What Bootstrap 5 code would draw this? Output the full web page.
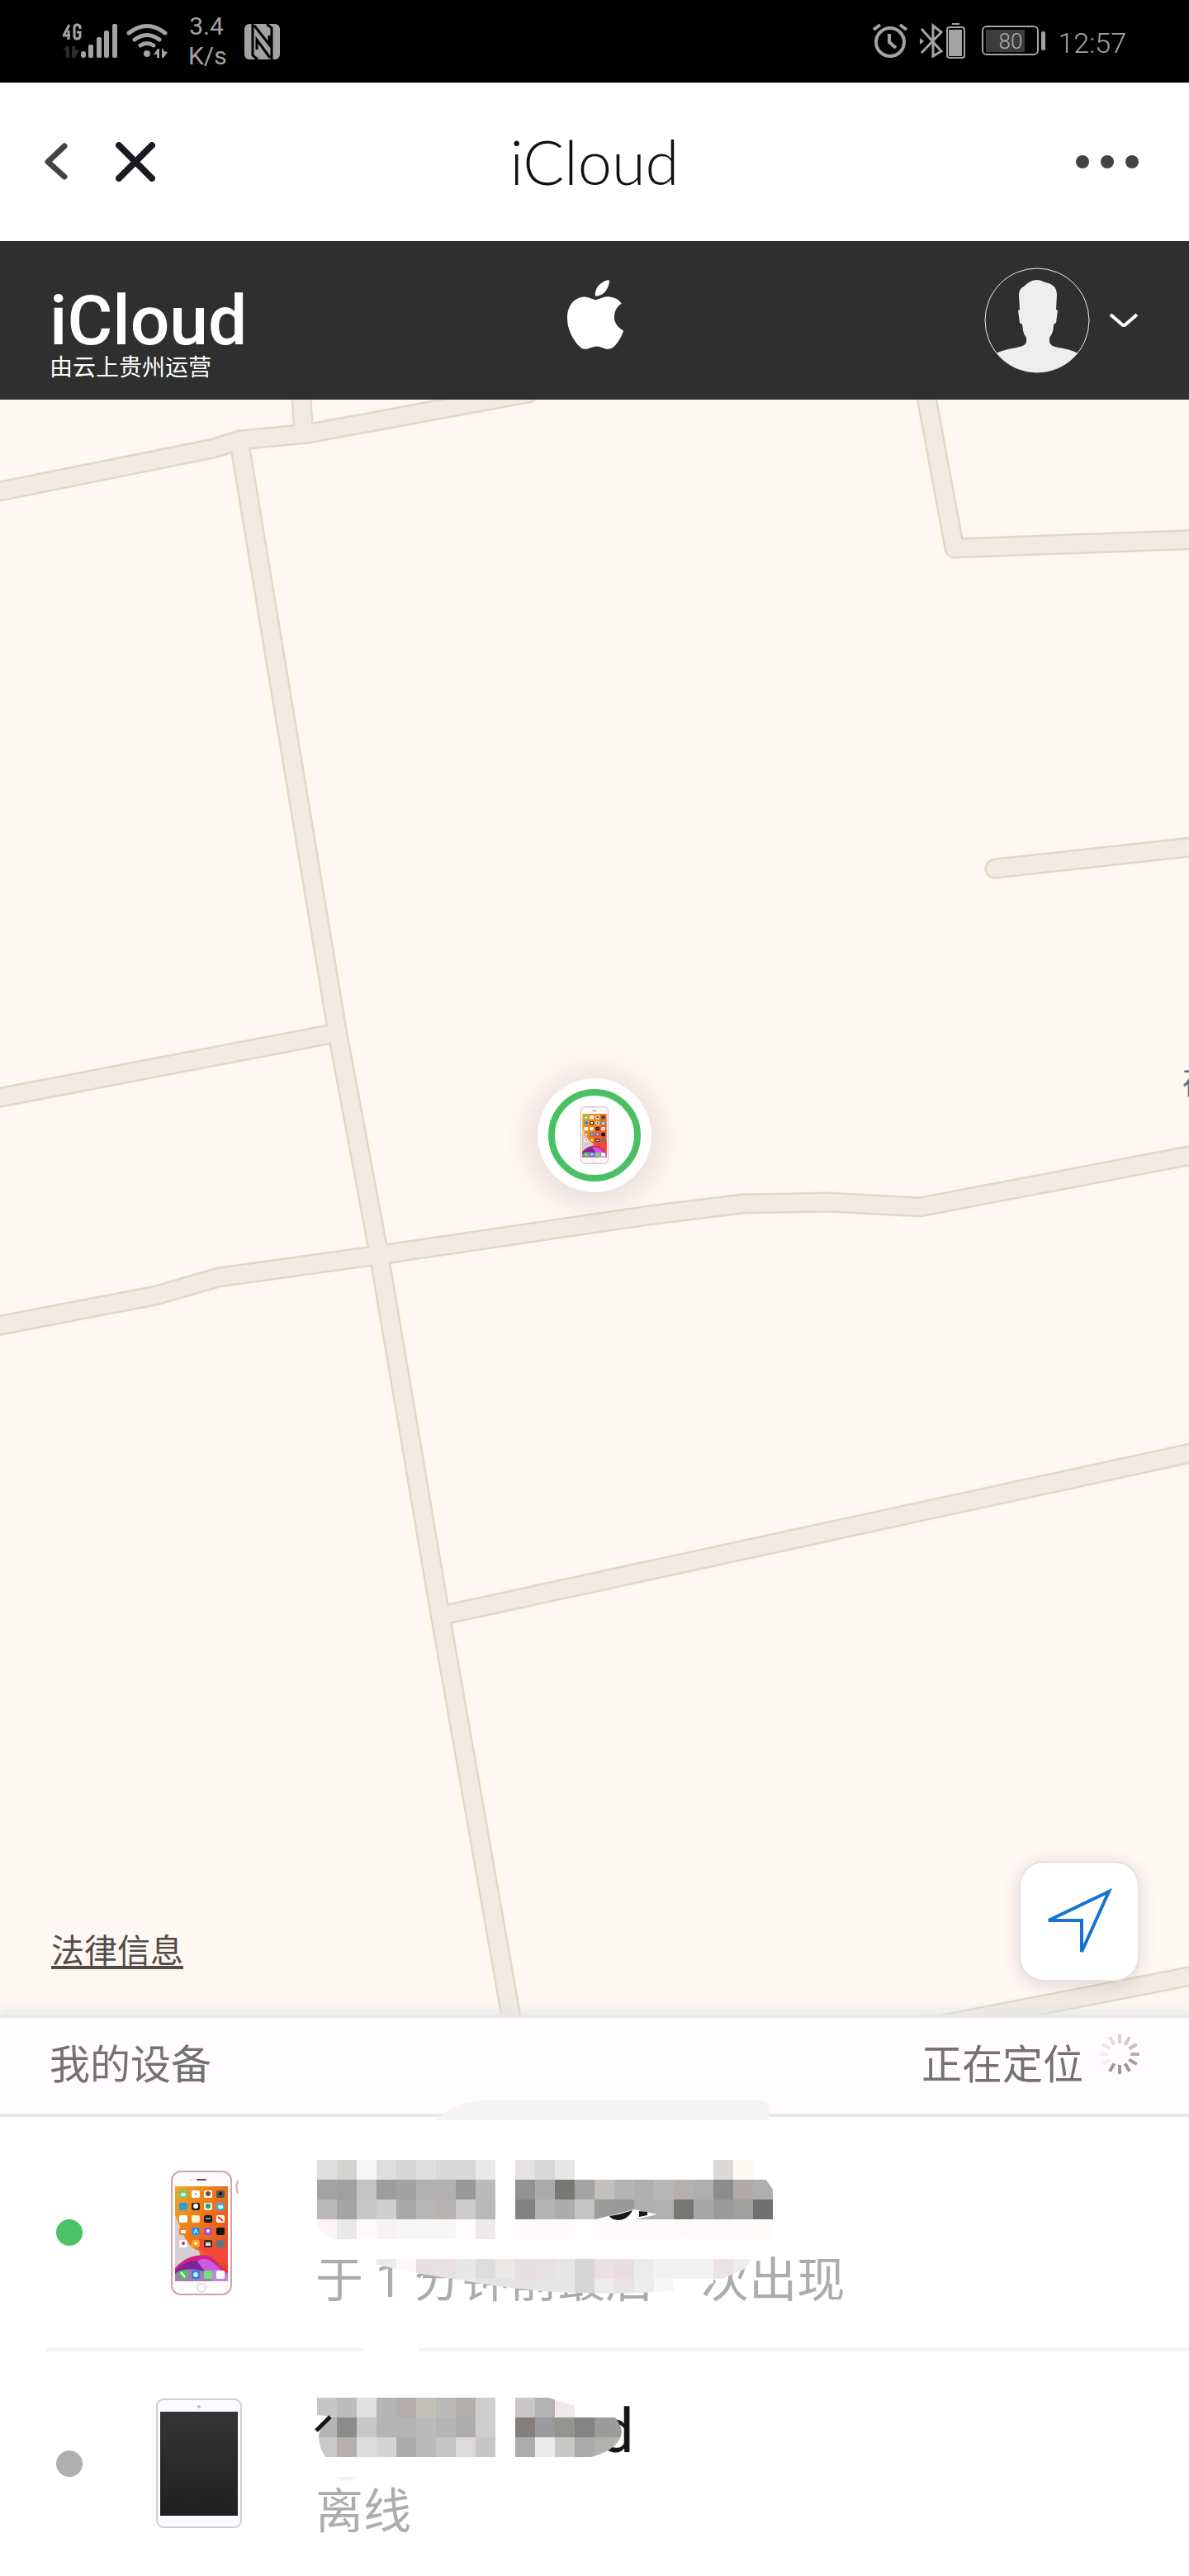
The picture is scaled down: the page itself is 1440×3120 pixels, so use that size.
<!DOCTYPE html>
<html lang="zh-CN">
<head>
<meta charset="utf-8">
<meta name="viewport" content="width=device-width, initial-scale=1">
<title>iCloud</title>
<link href="https://cdn.jsdelivr.net/npm/bootstrap@5.3.0/dist/css/bootstrap.min.css" rel="stylesheet">
<style>
  body { font-family: Roboto, "Noto Sans CJK SC", sans-serif; background: #fff; }
  svg { display: block; flex: none; }
  button { background: none; border: 0; padding: 0; }
  .status-bar { background: #000; color: #a3a3a3; height: 100px; padding: 0 76px; }
  .net-speed { font-size: 30px; line-height: 36px; width: 44px; }
  .battery { margin-left: 20px; }
  .clock { font: 300 34px/44px "Liberation Sans Narrow", Roboto, sans-serif; margin-left: 14px; padding-top: 4px; }
  .title-bar { height: 192px; padding: 0 54px; display: grid; grid-template-columns: 1fr auto 1fr; }
  .title-bar h1 { font: 300 74px/96px Lato, sans-serif; color: #111; }
  .nav-actions { gap: 56px; }
  .site-header { background: #2f2f2f; height: 192px; padding: 0 60px; display: grid; grid-template-columns: 1fr auto 1fr; }
  .brand-name { font-size: 84px; font-weight: 500; line-height: 90px; }
  .brand-note { font-size: 28px; line-height: 24px; }
  .brand-block { padding-top: 52px; }
  .apple-logo { padding-top: 47px; }
  .account { gap: 22px; padding-top: 32px; }
  .map-area { background: #fef7f4; min-height: 600px; }
  .map-pin { width: 138px; height: 138px; top: 822px; left: 50%; transform: translateX(-50%); background: #fff; box-shadow: 0 4px 30px 12px rgba(110, 80, 70, .13); }
  .pin-ring { width: 112px; height: 112px; border: 8px solid #4bbf63; }
  .place-label { right: -30px; top: 804px; font-size: 38px; line-height: 48px; color: #5f6d82; }
  .map-tools { padding: 0 62px 42px; }
  .legal { font-size: 40px; line-height: 52px; margin-bottom: 8px; color: #4f4c48; text-decoration-thickness: 4px; text-underline-offset: 4px; }
  .legal:hover { color: #222; }
  .locate { width: 142px; height: 142px; border-radius: 28px; background: #fff; box-shadow: 0 0 0 2px #e4e2e3, 0 4px 22px rgba(90, 60, 60, .2); }
  .list-head { background: #fffbfe; color: #727272; border-top: 4px solid #e8e8e8; border-bottom: 4px solid #e8e8e8; height: 124px; padding: 0 60px; font-size: 49px; box-shadow: 0 -8px 8px rgba(225, 225, 232, .5); }
  .locating { gap: 20px; }
  .locating svg { margin-bottom: 28px; }
  .device { margin-left: 56px; height: 280px; padding-left: 12px; }
  .device + .device { border-top: 4px solid #f3f3f3; height: 276px; }
  .dot { width: 32px; height: 32px; background: #afafaf; flex: none; }
  .dot.online { background: #4cc266; }
  .thumb { width: 282px; }
  .thumb-phone { padding-left: 107px; }
  .thumb-tablet { padding-left: 89px; }
  .device-name { height: 116px; font-size: 74px; font-weight: 400; color: #161616; line-height: 116px; }
  .device-name .tail { padding-left: 344px; }
  .device-state { font-size: 58px; line-height: 78px; color: #acacac; white-space: nowrap; }
  .mosaic { position: absolute; left: 0; top: 0; overflow: visible; }
</style>
<script src="https://cdn.jsdelivr.net/npm/bootstrap@5.3.0/dist/js/bootstrap.bundle.min.js"></script>
</head>
<body class="d-flex flex-column min-vh-100">

<svg width="0" height="0" class="position-absolute" aria-hidden="true">
  <defs>
    <linearGradient id="wall" x1="0" y1="0" x2="1" y2="1">
      <stop offset="0" stop-color="#e9a92e"/><stop offset=".35" stop-color="#f07f16"/><stop offset="1" stop-color="#e2382c"/>
    </linearGradient>
    <linearGradient id="glass" x1="0" y1="0" x2="0" y2="1">
      <stop offset="0" stop-color="#343434"/><stop offset="1" stop-color="#202020"/>
    </linearGradient>
    <symbol id="phone" viewBox="0 0 74 151">
      <rect x="1" y="1" width="72" height="149" rx="11" fill="#fffafa" stroke="#cfa3a8" stroke-width="2"/>
      <rect x="31" y="10" width="12" height="2" rx="1" fill="#555"/><circle cx="24" cy="11" r="1" fill="#bbb"/>
      <rect x="5" y="19" width="64" height="115" fill="url(#wall)"/>
      <path d="M5 54C18 84 20 92 34 97L36 106 5 122Z" fill="#d4cfd2"/>
      <path d="M34 94Q46 108 69 114V90L34 82Z" fill="#f2483c"/>
      <path d="M5 118Q24 98 48 104L69 124V134H5Z" fill="#d31d86"/>
      <path d="M5 122Q22 104 40 112L58 134H5Z" fill="#7b2696"/>
      <path d="M32 110Q44 98 69 130V134H50Z" fill="#c95be0"/>
      <path d="M5 125Q16 116 40 122 56 118 69 124V134H5Z" fill="#b9a0c4" opacity=".7"/>
      <g fill="#fff">
        <rect x="10" y="24" width="10" height="9" rx="2" fill="#5fd668"/><rect x="25" y="24" width="10" height="9" rx="2"/><rect x="40" y="24" width="10" height="9" rx="2"/><rect x="55" y="24" width="10" height="9" rx="2" fill="#555"/>
        <rect x="10" y="39" width="10" height="9" rx="2" fill="#2a9fe0"/><rect x="25" y="39" width="10" height="9" rx="2" fill="#222"/><rect x="40" y="39" width="10" height="9" rx="2" fill="#e9f4dc"/><rect x="55" y="39" width="10" height="9" rx="2" fill="#35b3ea"/>
        <rect x="10" y="54" width="10" height="9" rx="2"/><rect x="25" y="54" width="10" height="9" rx="2" fill="#fff4c6"/><rect x="40" y="54" width="10" height="9" rx="2" fill="#1c1c22"/><rect x="55" y="54" width="10" height="9" rx="2"/>
        <rect x="10" y="69" width="10" height="9" rx="2" fill="#f47f1c"/><rect x="25" y="69" width="10" height="9" rx="2" fill="#1e93ef"/><rect x="40" y="69" width="10" height="9" rx="2" fill="#a44ed6"/><rect x="55" y="69" width="10" height="9" rx="2" fill="#141414"/>
        <rect x="10" y="84" width="10" height="9" rx="2"/><rect x="25" y="84" width="10" height="9" rx="2" fill="#f8a21b"/><rect x="40" y="84" width="10" height="9" rx="2" fill="#332"/><rect x="55" y="84" width="10" height="9" rx="2" fill="#677"/>
        <rect x="10" y="121" width="10" height="10" rx="2" fill="#3fce4e"/><rect x="25" y="121" width="10" height="10" rx="2" fill="#2b7fe6"/><rect x="40" y="121" width="10" height="10" rx="2" fill="#6fe07a"/><rect x="55" y="121" width="10" height="10" rx="2"/>
      </g>
      <circle cx="45" cy="28" r="3" fill="#7a4a2a"/><circle cx="60" cy="28" r="2" fill="#111"/><circle cx="30" cy="43" r="3" fill="#fff"/><circle cx="45" cy="43" r="3" fill="#2e9e83"/><path d="M57 56L63 61" stroke="#e23" stroke-width="2"/><circle cx="15" cy="88" r="2" fill="#d25"/><circle cx="30" cy="88" r="2" fill="#fff"/><rect x="12" y="72" width="6" height="4" fill="#fff"/><path d="M28 76L30 71 32 76M42 58H48" stroke="#fff" fill="none"/><rect x="42" y="87" width="6" height="4" fill="#ddd"/><rect x="12" y="27" width="6" height="4" rx="2" fill="#fff"/><circle cx="30" cy="126" r="3" fill="#cfe6ff"/><rect x="57" y="42" width="6" height="4" rx="2" fill="#fff"/><circle cx="30" cy="28" r="1" fill="#e33"/><circle cx="45" cy="73" r="2" fill="#fff"/><path d="M12 123L17 129" stroke="#fff" stroke-width="2"/>
      <circle cx="37" cy="142" r="5" fill="#fff" stroke="#cdbcc0"/>
    </symbol>
  </defs>
</svg>

<div class="status-bar d-flex align-items-center justify-content-between">
  <div class="d-flex align-items-center">
    <svg width="66" height="44" viewBox="76 28 66 44" fill="#a3a3a3" role="img" aria-label="4G">
      <path d="M84 30L77 43H85M83 37V48M97 35V33Q97 30 93 30 90 30 90 34V43Q90 47 93 47 97 47 97 43V39H93" fill="none" stroke="#a3a3a3" stroke-width="3"/>
      <path d="M76 61L81 56H84V70H80V61ZM87 56H91V60L96 61 91 70H87Z" fill="#2c2c2c"/>
      <rect x="98" y="62" width="6" height="8" rx="3"/><rect x="107" y="54" width="6" height="16" rx="2"/><rect x="117" y="45" width="6" height="25" rx="2"/><rect x="126" y="37" width="6" height="33" rx="2"/><rect x="136" y="29" width="6" height="41" rx="2"/>
    </svg>
    <svg class="ms-2" width="54" height="44" viewBox="150 28 54 44" fill="none" stroke="#a3a3a3" stroke-width="5" stroke-linecap="round">
      <path d="M156 40Q178 23 200 40M163 48Q178 37 193 48M170 55Q178 50 186 55"/>
      <g fill="#a3a3a3" stroke="none"><circle cx="178" cy="65" r="4"/><path d="M186 66L191 59H193V70H190V66ZM196 59H198V62L203 63 198 70H196Z"/></g>
    </svg>
    <div class="net-speed text-center ms-4">3.4 K/s</div>
    <svg class="ms-4" width="43" height="43" viewBox="0 0 43 43">
      <rect width="43" height="43" rx="6" fill="#a3a3a3"/>
      <path d="M10 0V38L16 43M33 43V5L27 0M12 2L30 25V14M31 41L15 19V31" fill="none" stroke="#000" stroke-width="3"/>
    </svg>
  </div>
  <div class="d-flex align-items-center">
    <svg width="112" height="44" viewBox="1069 28 112 44" fill="none" stroke="#a3a3a3" stroke-width="4">
      <circle cx="1090" cy="51" r="17"/><path d="M1089 41V51L1097 58M1070 36L1078 30M1102 30L1110 36"/>
      <path d="M1128 35L1152 62 1142 68V31L1152 39 1128 64" stroke-width="3"/><path d="M1126 46L1131 50 1126 54Z" fill="#a3a3a3" stroke="none"/>
      <rect x="1159" y="33" width="21" height="37" rx="3" stroke-width="2"/><rect x="1161" y="36" width="16" height="32" fill="#a3a3a3" stroke="none"/><path d="M1165 29H1174" stroke-width="2"/>
    </svg>
    <svg class="battery" width="78" height="38" viewBox="1200 32 78 38">
      <rect x="1201" y="33" width="67" height="34" rx="5" fill="none" stroke="#a3a3a3" stroke-width="2"/><rect x="1205" y="37" width="47" height="27" fill="#3c3c3c"/><rect x="1272" y="39" width="5" height="23" rx="2" fill="#a3a3a3"/>
      <text x="1235" y="60" text-anchor="middle" font-family="Liberation Sans Narrow, Roboto, sans-serif" font-size="26" font-weight="300" fill="#b0b0b0">80</text>
    </svg>
    <div class="clock">12:57</div>
  </div>
</div>

<nav class="title-bar align-items-center">
  <div class="d-flex align-items-center nav-actions">
    <button type="button" aria-label="返回"><svg width="30" height="46" viewBox="0 0 30 46"><path d="M24 4L4 23 24 41" fill="none" stroke="#444" stroke-width="7" stroke-linecap="round" stroke-linejoin="round"/></svg></button>
    <button type="button" aria-label="关闭"><svg width="48" height="48" viewBox="0 0 48 48"><path d="M4 4L44 44M44 4L4 44" stroke="#1a1a22" stroke-width="8" stroke-linecap="round"/></svg></button>
  </div>
  <h1 class="m-0">iCloud</h1>
  <button type="button" class="ms-auto" aria-label="更多"><svg width="84" height="16" viewBox="0 0 84 16" fill="#434343"><circle cx="9" cy="8" r="8"/><circle cx="39" cy="8" r="8"/><circle cx="69" cy="8" r="8"/></svg></button>
</nav>

<header class="site-header text-white">
  <div class="brand-block">
    <div class="brand-name">iCloud</div>
    <div class="brand-note">由云上贵州运营</div>
  </div>
  <div class="apple-logo">
    <svg width="69" height="84" viewBox="1.3 0 13.2 16" fill="#fff" role="img" aria-label="Apple"><path d="M11.182.008C11.148-.03 9.923.023 8.857 1.18c-1.066 1.156-.902 2.482-.878 2.516s1.52.087 2.475-1.258.762-2.391.728-2.43m3.314 11.733c-.048-.096-2.325-1.234-2.113-3.422s1.675-2.789 1.698-2.854-.597-.79-1.254-1.157a3.7 3.7 0 0 0-1.563-.434c-.108-.003-.483-.095-1.254.116-.508.139-1.653.589-1.968.607-.316.018-1.256-.522-2.267-.665-.647-.125-1.333.131-1.824.328-.49.196-1.422.754-2.074 2.237-.652 1.482-.311 3.83-.067 4.56s.625 1.924 1.273 2.796c.576.984 1.34 1.667 1.659 1.899s1.219.386 1.843.067c.502-.308 1.408-.485 1.766-.472.357.013 1.061.154 1.782.539.571.197 1.111.115 1.652-.105.541-.221 1.324-1.059 2.238-2.758q.52-1.185.473-1.282"/></svg>
  </div>
  <div>
    <button type="button" class="account d-flex align-items-center ms-auto" aria-label="账户">
      <svg width="128" height="128" viewBox="0 0 128 128">
        <clipPath id="disc"><circle cx="64" cy="64" r="63"/></clipPath>
        <path clip-path="url(#disc)" fill="#eee" d="M64 15C69 15 72 18 78 19 86 22 88 27 88 34L87 51 89 52 87 67 84 69C84 75 83 80 79 85V90C80 94 84 96 90 97 102 99 108 101 114 104V128H14V104C20 101 28 99 39 97 47 95 50 94 51 90V85C47 80 47 75 46 69L43 67 41 52 43 51 42 34C42 28 44 25 48 23 53 18 58 15 64 15Z"/>
        <circle cx="64" cy="64" r="63" fill="none" stroke="#eee" stroke-width="1"/>
      </svg>
      <svg width="38" height="20" viewBox="0 0 38 20"><path d="M3 3L18 16H20L35 3" fill="none" stroke="#fff" stroke-width="4"/></svg>
    </button>
  </div>
</header>

<main class="map-area position-relative overflow-hidden flex-grow-1 d-flex flex-column justify-content-end">
  <svg class="position-absolute top-0 start-0 w-100 h-100" viewBox="0 484 1440 1956" preserveAspectRatio="xMidYMin slice" aria-hidden="true">
    <defs>
      <g id="roads" fill="none" stroke-linecap="round" stroke-linejoin="round">
        <path d="M-20 599L259 543 290 533 374 525 640 476M364 470L368 525"/>
        <path d="M290 536L408 1247 459 1520 533 1955 622 2460"/>
        <path d="M-20 1333L408 1251"/>
        <path d="M-20 1609L189 1569 265 1547 459 1520 786 1472 899 1458 1004 1456 1114 1462 1460 1396"/>
        <path d="M533 1957L1460 1756"/>
        <path d="M1120 470L1156 664 1460 653"/>
        <path d="M1205 1052L1460 1024"/>
        <path d="M1120 2456L1460 2390"/>
      </g>
    </defs>
    <use href="#roads" stroke="#fdf8ee" stroke-width="34"/>
    <use href="#roads" stroke="#dfd9cb" stroke-width="25"/>
    <use href="#roads" stroke="#f1ebe1" stroke-width="20"/>
  </svg>
  <span class="place-label position-absolute">荷</span>
  <div class="map-pin position-absolute rounded-circle d-flex align-items-center justify-content-center">
    <div class="pin-ring rounded-circle d-flex align-items-center justify-content-center">
      <svg width="34" height="70"><use href="#phone" width="34" height="70"/></svg>
    </div>
  </div>
  <div class="map-tools position-relative d-flex justify-content-between align-items-end">
    <a href="#" class="legal">法律信息</a>
    <button type="button" class="locate d-flex align-items-center justify-content-center" aria-label="定位">
      <svg width="80" height="80" viewBox="0 0 80 80"><path d="M3 39L76 4 43 77V39Z" fill="none" stroke="#1673d1" stroke-width="4"/></svg>
    </button>
  </div>
</main>

<section>
  <div class="list-head position-relative d-flex align-items-center justify-content-between">
    <span>我的设备</span>
    <span class="locating d-flex align-items-center">正在定位
      <svg width="48" height="48" viewBox="-24 -24 48 48" stroke-width="4" stroke="#999">
        <path d="M0-13V-24" opacity=".4"/><path d="M0-13V-24" transform="rotate(30)" opacity=".5"/><path d="M0-13V-24" transform="rotate(60)" opacity=".6"/><path d="M0-13V-24" transform="rotate(90)" opacity=".75"/><path d="M0-13V-24" transform="rotate(120)" opacity=".9"/><path d="M0-13V-24" transform="rotate(150)"/><path d="M0-13V-24" transform="rotate(180)"/><path d="M0-13V-24" transform="rotate(210)"/><path d="M0-13V-24" transform="rotate(240)" opacity=".1"/><path d="M0-13V-24" transform="rotate(270)" opacity=".12"/><path d="M0-13V-24" transform="rotate(300)" opacity=".2"/><path d="M0-13V-24" transform="rotate(330)" opacity=".3"/>
      </svg>
    </span>
  </div>
  <ul class="list-unstyled m-0">
    <li class="device d-flex align-items-center">
      <span class="dot online rounded-circle"></span>
      <div class="thumb thumb-phone"><svg width="82" height="151" viewBox="0 0 82 151"><use href="#phone" width="74" height="151"/><path d="M81 12Q78 20 81 28" fill="none" stroke="#d9a9a9" stroke-width="2"/></svg></div>
      <div class="position-relative">
        <div class="device-name"></div>
        <div class="device-state">于 1 分钟前最后一次出现</div>
        <svg class="mosaic" id="cover-a" width="560" height="194" viewBox="382 2607 560 194" aria-hidden="true"></svg>
      </div>
    </li>
    <li class="device d-flex align-items-center">
      <span class="dot rounded-circle"></span>
      <div class="thumb thumb-tablet">
        <svg width="104" height="158" viewBox="0 0 104 158"><rect x="1" y="1" width="102" height="155" rx="8" fill="#fcfbff" stroke="#cfcfcf" stroke-width="2"/><circle cx="52" cy="10" r="2" fill="#bbb"/><rect x="5" y="16" width="94" height="126" fill="url(#glass)"/></svg>
      </div>
      <div class="position-relative">
        <div class="device-name"><span class="tail">d</span></div>
        <div class="device-state">离线</div>
        <svg class="mosaic" id="cover-b" width="400" height="194" viewBox="382 2887 400 194" aria-hidden="true"></svg>
      </div>
    </li>
  </ul>
</section>

<script>
  // Privacy covers: rows of 24px cells, "-" leaves a cell empty.
  function cells(rows, x0) {
    return rows.map(function (r) {
      return r[1].split(' ').map(function (c, i) {
        return c === '-' ? '' : '<rect x="' + (x0 + i * 24) + '" y="' + r[0] + '" width="24" height="24" fill="#' + c + '"/>';
      }).join('');
    }).join('');
  }
  document.getElementById('cover-a').innerHTML =
    '<path d="M528 2568Q548 2546 584 2544H922Q931 2544 931 2556V2568Z" fill="#f5f5f5"/>' +
    '<clipPath id="ca"><path d="M384 2600H900L936 2652V2712H402L384 2698Z"/></clipPath><g clip-path="url(#ca)" shape-rendering="crispEdges">' + cells([
      [2616, 'dedede d5d3d2 f6f6f6 dedede d6d6d6 dedede d8d8d8 d8d8d8 e9e9e9 - e5e2e1 d8d8d8 e8e8e8 - - - - - - - dbd9d8 fef9f5'],
      [2640, 'a3a3a3 a0a0a0 c3c3c3 9d9d9d a2a2a2 b1b1b1 b1b1b1 989898 bbbbbb - 929292 ababab 787873 a3a3a3 c3bfbb b4b4b4 afafaf b7b7b7 b5b0ae aeaeae 8d8d8d b0aba9 afafaf'],
      [2664, 'b9b9b9 a4a4a4 c9c7c6 cfcfcf a9a9a9 b6b6b6 b8b2b0 cdcdcd b8b8b8 - 828282 b4b4b4 acacac c4c4c4 9b9b99 999999 afafaf b0b0b0 787873 a6a6a6 9b9b9b 9f9f9d 707070'],
      [2688, 'fdf4f6 e9e9e9 fefafc f7f2f4 f6f6f6 f6f6f6 f6f6f6 fefdfb eeeaea - fefafd fefafd fefafd - fefafd fefafd fefafd fefafd fefafb fefafd fefafd fefafd fefbf9']
    ], 384) + '</g>' +
    '<path d="M721 2688L768 2676 796 2682 770 2688Z" fill="#fff"/><path d="M738 2684Q752 2682 766 2677 760 2689 748 2689 740 2688 738 2684ZM774 2678L784 2679V2683L774 2685Z" fill="#161616"/>' +
    '<clipPath id="cb"><path d="M456 2730V2743Q510 2755 560 2762 640 2776 700 2777 790 2780 853 2770L902 2748 914 2730Z"/></clipPath><g clip-path="url(#cb)" shape-rendering="crispEdges"><path d="M450 2728H920V2736H450Z" fill="#fff"/>' + cells([
      [2736, 'ebebeb fef8fb e8dfe2 e7e1e3 e8e8e8 dddddd ebe8e6 e7dfe1 e7e1e3 e6e6e6 d6d6d6 ebe0e3 e8dee2 ececec f2f2f2 f2f2f2 f2f2f2 ece3e5 efefef'],
      [2760, 'ebebeb ebebeb ebebeb ebebeb ebebeb e4e4e4 e4e4e4 e6e2e3 e6e6e6 e6e6e6 d6d6d6 ececec e9e3e5 ededed f7f7f7 ffffff ffffff']
    ], 456) + '</g>';
  document.getElementById('cover-b').innerHTML =
    '<path d="M436 2842H508V2846L500 2850H444Z" fill="#fff"/>' +
    '<clipPath id="cc"><path d="M384 2904H664L745 2928Q753 2938 753 2946 751 2966 716 2976H394Q386 2964 386 2950 388 2936 402 2927L384 2925Z"/></clipPath><g clip-path="url(#cc)" shape-rendering="crispEdges">' + cells([
      [2904, 'c6c6c6 bcbcbc e0e0e0 b5b5b5 b3aeac c3bfb9 bababa b2aeac cecece - cbc7c6 b2b2b2 f1e9e9'],
      [2928, 'b5b5b5 8c8c8a c7c7c7 b4b4b4 b4b4b4 bbbbbb b5b5b5 adadad cecece - 857f7b 9b9b9f 949491 838383 9b9b9b 9b9b9b'],
      [2952, 'cbc9c8 b7afab dcdcdc d4d4d4 acacac bababa c4c4c4 dedad8 c6c6c6 - adadad ebebeb cac8c6 ababab b3b1ac b9b7b1']
    ], 384) + '</g><path d="M383 2944L400 2927" stroke="#161616" stroke-width="5"/><path d="M404 3000H432Q418 3009 404 3000Z" fill="#f3f3f3"/>';
</script>
</body>
</html>
